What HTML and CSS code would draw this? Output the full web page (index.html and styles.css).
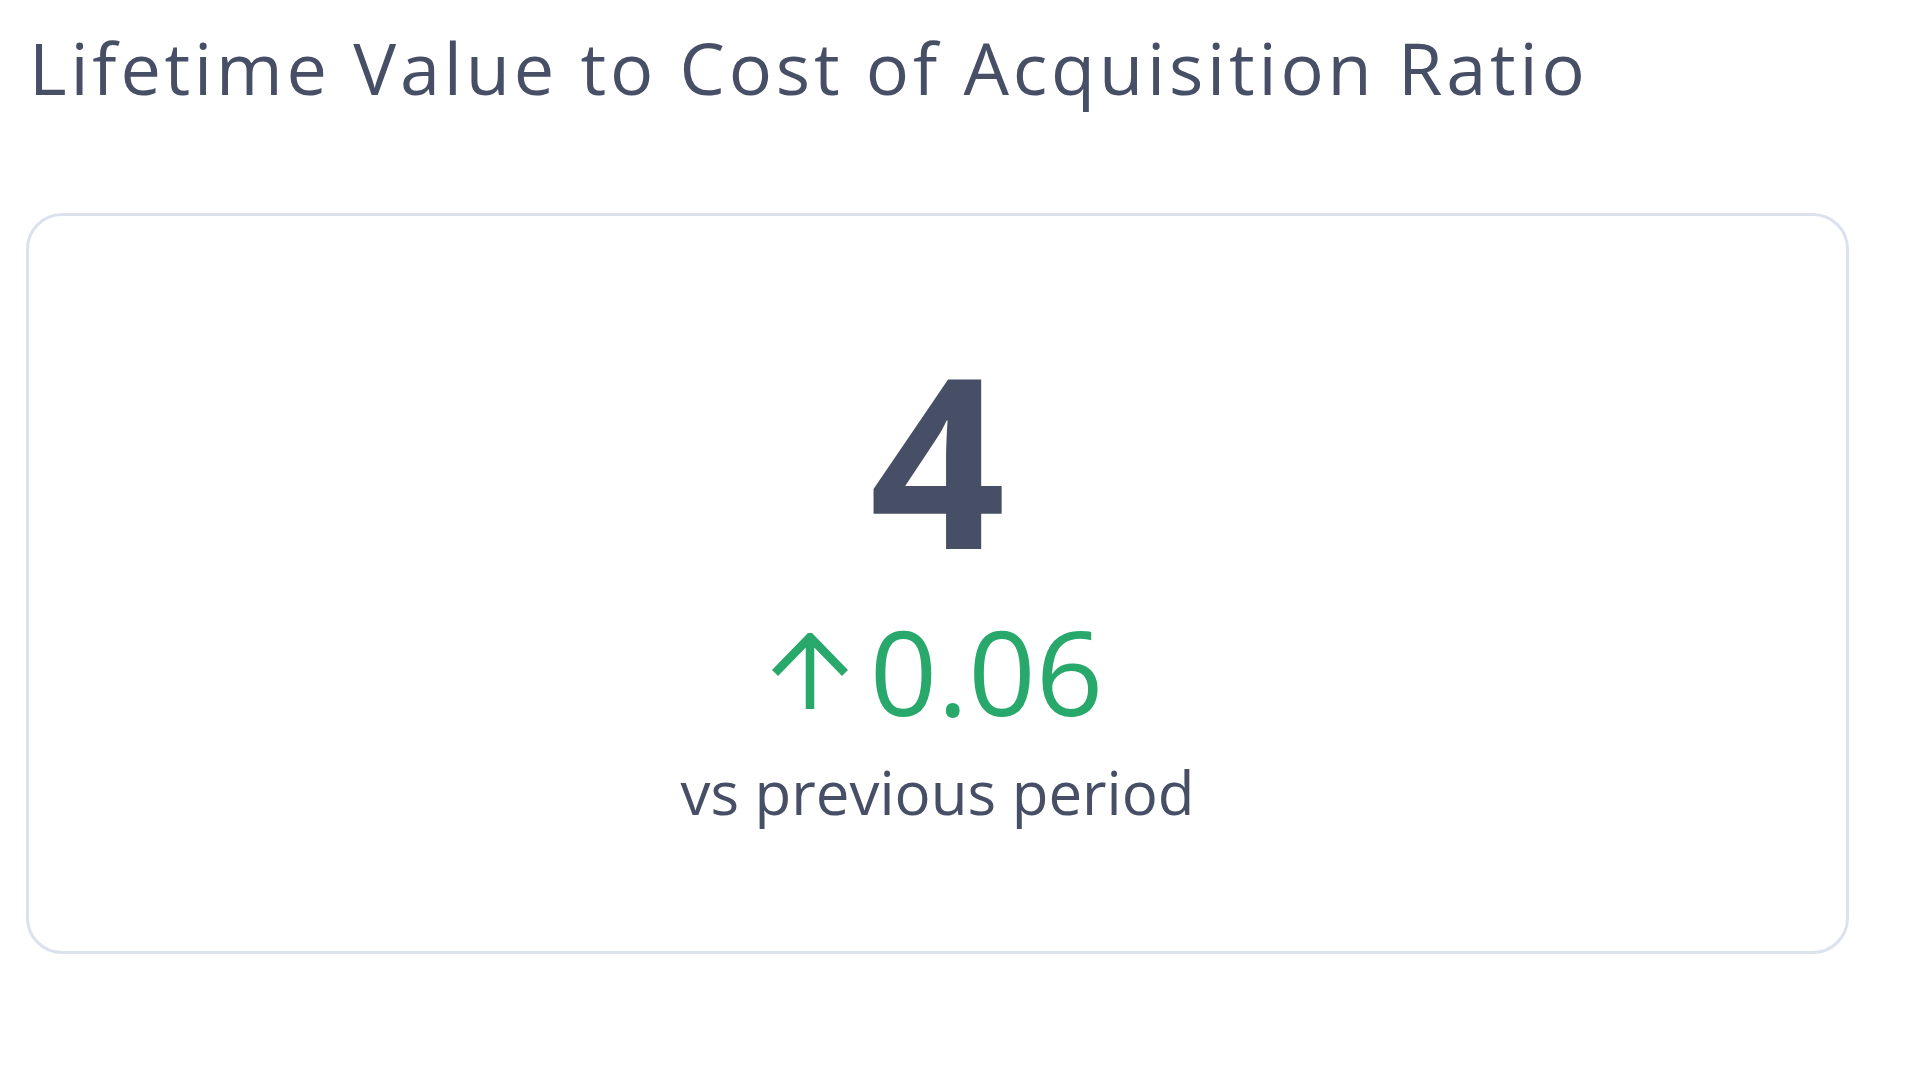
FILE: index.html
```html
<!DOCTYPE html>
<html lang="en">
<head>
<meta charset="utf-8">
<title>LTV to CAC Ratio</title>
<link rel="stylesheet" href="styles.css">
</head>
<body>
<div class="widget">
  <h2 class="widget-title">Lifetime Value to Cost of Acquisition Ratio</h2>
  <div class="kpi-card">
    <div class="kpi-value">4</div>
    <div class="kpi-change">
      <svg class="kpi-arrow" viewBox="0 0 76 76" aria-hidden="true">
        <path d="M38 76 V4 M3 40 L38 4 L73 40" fill="none" stroke="#28a96b" stroke-width="8.5" stroke-linejoin="miter"/>
      </svg>
      <span class="kpi-delta">0.06</span>
    </div>
    <div class="kpi-caption">vs previous period</div>
  </div>
</div>
</body>
</html>
```

FILE: styles.css
```css
html, body {
  margin: 0;
  padding: 0;
  background: #ffffff;
}

body {
  font-family: "Open Sans", "Noto Sans", sans-serif;
  color: #474f66;
}

.widget {
  padding: 18px 71px 0 26px;
  display: flex;
  flex-direction: column;
}

.widget-title {
  margin: 0;
  padding-left: 3px;
  font-size: 72px;
  font-weight: 400;
  line-height: 98px;
  letter-spacing: 3.8px;
  color: #474f66;
  white-space: nowrap;
}

.kpi-card {
  margin-top: 97px;
  height: 741px;
  box-sizing: border-box;
  border: 3px solid #dce1ee;
  border-radius: 36px;
  display: flex;
  flex-direction: column;
  align-items: center;
  padding-top: 124px;
}

.kpi-value {
  font-size: 238px;
  font-weight: 700;
  line-height: 234px;
  color: #474f66;
}

.kpi-change {
  display: flex;
  align-items: center;
  gap: 22px;
  margin-top: 32px;
  color: #28a96b;
}

.kpi-arrow {
  width: 76px;
  height: 76px;
  flex: none;
}

.kpi-delta {
  font-size: 118px;
  line-height: 130px;
  font-weight: 400;
}

.kpi-caption {
  margin-top: 16px;
  font-size: 60px;
  line-height: 80px;
  color: #474f66;
}
```
